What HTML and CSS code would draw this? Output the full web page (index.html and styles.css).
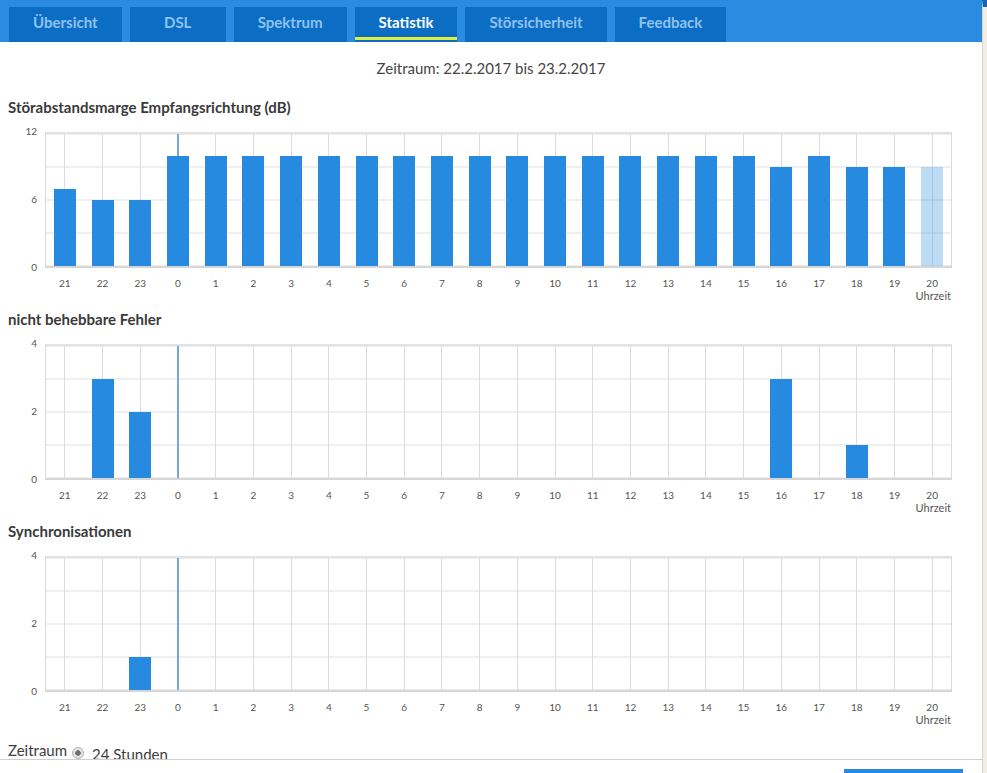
FILE: index.html
```html
<!DOCTYPE html>
<html lang="de">
<head>
<meta charset="utf-8">
<title>DSL Statistik</title>
<link rel="stylesheet" href="styles.css">
</head>
<body>
<div class="frame">
  <div class="app">
    <nav class="tabs">
      <span class="tab">Übersicht</span>
      <span class="tab">DSL</span>
      <span class="tab">Spektrum</span>
      <span class="tab active">Statistik</span>
      <span class="tab">Störsicherheit</span>
      <span class="tab">Feedback</span>
    </nav>
    <main class="content">
      <p class="period">Zeitraum: 22.2.2017 bis 23.2.2017</p>

      <section class="chart">
        <h2 class="chart-title">Störabstandsmarge Empfangsrichtung (dB)</h2>
        <div class="chart-body">
          <div class="yaxis"><span>12</span><span>6</span><span>0</span></div>
          <div class="plot">
            <div class="col"><div class="bar" style="height:58.33%"></div></div>
            <div class="col"><div class="bar" style="height:50%"></div></div>
            <div class="col"><div class="bar" style="height:50%"></div></div>
            <div class="col mark"><div class="bar" style="height:83.33%"></div></div>
            <div class="col"><div class="bar" style="height:83.33%"></div></div>
            <div class="col"><div class="bar" style="height:83.33%"></div></div>
            <div class="col"><div class="bar" style="height:83.33%"></div></div>
            <div class="col"><div class="bar" style="height:83.33%"></div></div>
            <div class="col"><div class="bar" style="height:83.33%"></div></div>
            <div class="col"><div class="bar" style="height:83.33%"></div></div>
            <div class="col"><div class="bar" style="height:83.33%"></div></div>
            <div class="col"><div class="bar" style="height:83.33%"></div></div>
            <div class="col"><div class="bar" style="height:83.33%"></div></div>
            <div class="col"><div class="bar" style="height:83.33%"></div></div>
            <div class="col"><div class="bar" style="height:83.33%"></div></div>
            <div class="col"><div class="bar" style="height:83.33%"></div></div>
            <div class="col"><div class="bar" style="height:83.33%"></div></div>
            <div class="col"><div class="bar" style="height:83.33%"></div></div>
            <div class="col"><div class="bar" style="height:83.33%"></div></div>
            <div class="col"><div class="bar" style="height:75%"></div></div>
            <div class="col"><div class="bar" style="height:83.33%"></div></div>
            <div class="col"><div class="bar" style="height:75%"></div></div>
            <div class="col"><div class="bar" style="height:75%"></div></div>
            <div class="col"><div class="bar current" style="height:75%"></div></div>
          </div>
        </div>
        <div class="xaxis">
          <span>21</span><span>22</span><span>23</span><span>0</span><span>1</span><span>2</span><span>3</span><span>4</span><span>5</span><span>6</span><span>7</span><span>8</span><span>9</span><span>10</span><span>11</span><span>12</span><span>13</span><span>14</span><span>15</span><span>16</span><span>17</span><span>18</span><span>19</span><span>20</span>
        </div>
        <div class="xtitle">Uhrzeit</div>
      </section>

      <section class="chart">
        <h2 class="chart-title">nicht behebbare Fehler</h2>
        <div class="chart-body">
          <div class="yaxis"><span>4</span><span>2</span><span>0</span></div>
          <div class="plot">
            <div class="col"></div>
            <div class="col"><div class="bar" style="height:75%"></div></div>
            <div class="col"><div class="bar" style="height:50%"></div></div>
            <div class="col mark"></div>
            <div class="col"></div><div class="col"></div><div class="col"></div><div class="col"></div>
            <div class="col"></div><div class="col"></div><div class="col"></div><div class="col"></div>
            <div class="col"></div><div class="col"></div><div class="col"></div><div class="col"></div>
            <div class="col"></div><div class="col"></div><div class="col"></div>
            <div class="col"><div class="bar" style="height:75%"></div></div>
            <div class="col"></div>
            <div class="col"><div class="bar" style="height:25%"></div></div>
            <div class="col"></div>
            <div class="col"></div>
          </div>
        </div>
        <div class="xaxis">
          <span>21</span><span>22</span><span>23</span><span>0</span><span>1</span><span>2</span><span>3</span><span>4</span><span>5</span><span>6</span><span>7</span><span>8</span><span>9</span><span>10</span><span>11</span><span>12</span><span>13</span><span>14</span><span>15</span><span>16</span><span>17</span><span>18</span><span>19</span><span>20</span>
        </div>
        <div class="xtitle">Uhrzeit</div>
      </section>

      <section class="chart">
        <h2 class="chart-title">Synchronisationen</h2>
        <div class="chart-body">
          <div class="yaxis"><span>4</span><span>2</span><span>0</span></div>
          <div class="plot">
            <div class="col"></div>
            <div class="col"></div>
            <div class="col"><div class="bar" style="height:25%"></div></div>
            <div class="col mark"></div>
            <div class="col"></div><div class="col"></div><div class="col"></div><div class="col"></div>
            <div class="col"></div><div class="col"></div><div class="col"></div><div class="col"></div>
            <div class="col"></div><div class="col"></div><div class="col"></div><div class="col"></div>
            <div class="col"></div><div class="col"></div><div class="col"></div><div class="col"></div>
            <div class="col"></div><div class="col"></div><div class="col"></div><div class="col"></div>
          </div>
        </div>
        <div class="xaxis">
          <span>21</span><span>22</span><span>23</span><span>0</span><span>1</span><span>2</span><span>3</span><span>4</span><span>5</span><span>6</span><span>7</span><span>8</span><span>9</span><span>10</span><span>11</span><span>12</span><span>13</span><span>14</span><span>15</span><span>16</span><span>17</span><span>18</span><span>19</span><span>20</span>
        </div>
        <div class="xtitle">Uhrzeit</div>
      </section>

      <div class="range">
        <span class="range-label">Zeitraum</span>
        <span class="radio"></span>
        <span class="range-value">24 Stunden</span>
      </div>
    </main>
    <footer class="footer">
      <span class="button"></span>
    </footer>
  </div>
  <div class="side"></div>
</div>
</body>
</html>
```
FILE: styles.css
```css
html, body {
  margin: 0;
  padding: 0;
  background: #ffffff;
}

body {
  font-family: "Lato", "Open Sans", "DejaVu Sans", sans-serif;
  color: #3c3c3c;
}

.frame {
  display: flex;
  width: 987px;
  height: 773px;
  overflow: hidden;
}

.app {
  width: 982px;
  display: flex;
  flex-direction: column;
  background: #ffffff;
}

.side {
  flex: 1;
  background: #f2eee5;
  border-left: 1px solid #d9d5cc;
  border-top: 7px solid #1764b4;
}

/* Tabs */
.tabs {
  display: flex;
  gap: 8px;
  height: 42px;
  box-sizing: border-box;
  padding: 7px 0 0 9px;
  background: #2a8ce0;
  flex: none;
}

.tab {
  display: flex;
  align-items: center;
  justify-content: center;
  box-sizing: border-box;
  min-width: 96px;
  height: 35px;
  padding: 0 24px 5px;
  background: #0b6ec4;
  color: #8fc2ee;
  font-size: 15px;
  font-weight: 700;
}

.tab.active {
  color: #ffffff;
  background-color: #0b6ec4;
  background-image: linear-gradient(#dfec3b, #dfec3b);
  background-size: 100% 3px;
  background-position: 0 30px;
  background-repeat: no-repeat;
}

/* Content */
.content {
  height: 717px;
  overflow: hidden;
  flex: none;
}

.period {
  margin: 16px 0 0;
  line-height: 20px;
  text-align: center;
  font-size: 15px;
  color: #454545;
}

.chart {
  margin-top: 19px;
}

.chart + .chart {
  margin-top: 7px;
}

.chart-title {
  margin: 0 0 15px 8px;
  font-size: 15px;
  font-weight: 700;
  line-height: 20px;
  color: #3a3a3a;
}

.chart-body {
  display: grid;
  grid-template-columns: 45px 907px;
  align-items: start;
}

.yaxis {
  display: flex;
  flex-direction: column;
  justify-content: space-between;
  align-items: flex-end;
  height: 148px;
  margin-top: -7px;
  padding-right: 8px;
  box-sizing: border-box;
  font-size: 10px;
  line-height: 12px;
  color: #555555;
}

.plot {
  display: grid;
  grid-template-columns: repeat(24, 1fr);
  height: 136px;
  box-sizing: border-box;
  border-left: 1px solid #dadada;
  border-right: 1px solid #dadada;
  border-top: 2px solid #e2e2e2;
  border-bottom: 2px solid #d6d6d6;
  background-image: linear-gradient(to bottom, #dedede 1px, transparent 1px);
  background-size: 100% 25%;
  background-repeat: repeat-y;
  background-position: 0 -0.5px;
}

.col {
  display: flex;
  justify-content: center;
  align-items: flex-end;
  background-image: linear-gradient(#dcdcdc, #dcdcdc);
  background-size: 1px 100%;
  background-position: center;
  background-repeat: no-repeat;
}

.col.mark {
  background-image: linear-gradient(#74a6d6, #74a6d6);
  background-size: 2px 100%;
}

.bar {
  width: 22px;
  background: #268be0;
}

.bar.current {
  background: rgba(38, 139, 224, 0.3);
}

.xaxis {
  display: grid;
  grid-template-columns: repeat(24, 1fr);
  width: 905px;
  margin: 3px 0 0 46px;
  font-size: 10px;
  line-height: 14px;
  color: #555555;
  text-align: center;
}

.xtitle {
  width: 951px;
  text-align: right;
  font-size: 11px;
  line-height: 12px;
  color: #555555;
}

/* Range selector */
.range {
  display: flex;
  align-items: center;
  margin-top: 14px;
  padding-left: 8px;
  font-size: 15px;
  color: #3c3c3c;
}

.range-label {
  line-height: 20px;
  margin-top: -4px;
}

.radio {
  width: 10px;
  height: 10px;
  margin: 2px 0 0 5px;
  border-radius: 50%;
  border: 1px solid #b0b0b0;
  background: radial-gradient(circle, #6e6e6e 0 2.5px, #e4e4e4 3px);
}

.range-value {
  margin-left: 8px;
  margin-top: 4px;
  line-height: 20px;
}

/* Footer */
.footer {
  flex: 1;
  border-top: 1px solid #cfcfcf;
  display: flex;
  justify-content: flex-end;
  padding: 9px 19px 0 0;
}

.button {
  width: 119px;
  height: 30px;
  background: #268be0;
}
```
